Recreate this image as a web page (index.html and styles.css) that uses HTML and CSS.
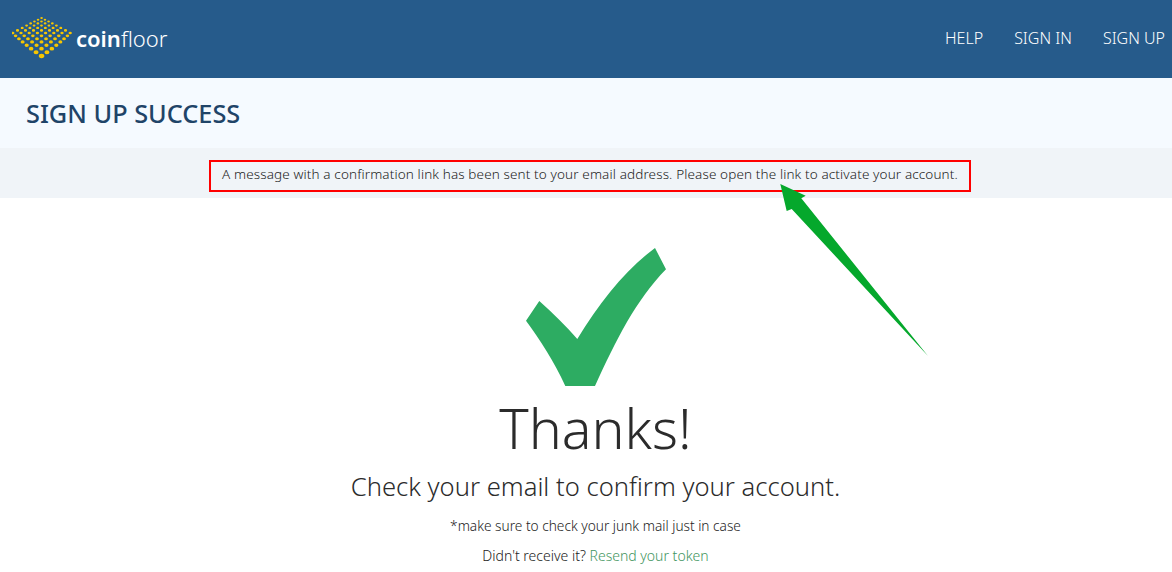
FILE: index.html
```html
<!DOCTYPE html>
<html lang="en">
<head>
<meta charset="utf-8">
<title>Sign up success - Coinfloor</title>
<link rel="stylesheet" href="styles.css">
</head>
<body>
<header class="topbar">
  <a class="brand" href="#">
    <svg class="brand-mark" viewBox="0 0 62 44" width="62" height="44" aria-hidden="true">
      <g transform="translate(-12 -17) scale(1 .8)" fill="none" stroke="#f7c600" stroke-linecap="round">
        <path stroke-width="2.5" d="M41.5 22.5h.1"/>
        <path stroke-width="2.6" stroke-dasharray="0 6.92" d="M38.04 24.6h6.93"/>
        <path stroke-width="2.7" stroke-dasharray="0 7.06" d="M34.44 26.9h14.13"/>
        <path stroke-width="2.8" stroke-dasharray="0 7.24" d="M30.64 29.3h21.73"/>
        <path stroke-width="2.9" stroke-dasharray="0 7.46" d="M26.58 32h29.85"/>
        <path stroke-width="3" stroke-dasharray="0 7.72" d="M22.2 34.9h38.61"/>
        <path stroke-width="3.2" stroke-dasharray="0 8" d="M17.5 38h48.01"/>
        <path stroke-width="3.3" stroke-dasharray="0 8.2" d="M12.8 41.2h57.41"/>
        <path stroke-width="3.6" stroke-dasharray="0 8.64" d="M15.58 44.8h51.85"/>
        <path stroke-width="3.8" stroke-dasharray="0 9.02" d="M18.95 48.4h45.11"/>
        <path stroke-width="4" stroke-dasharray="0 9.44" d="M22.62 52.4h37.77"/>
        <path stroke-width="4.2" stroke-dasharray="0 9.88" d="M26.68 56.5h29.65"/>
        <path stroke-width="4.6" stroke-dasharray="0 10.36" d="M31.14 60.8h20.73"/>
        <path stroke-width="5" stroke-dasharray="0 10.88" d="M36.06 65.3h10.89"/>
        <path stroke-width="5.4" d="M41.5 70h.1"/>
      </g>
    </svg>
    <span class="brand-name"><b>coin</b>floor</span>
  </a>
  <nav class="nav">
    <a href="#">HELP</a>
    <a href="#">SIGN IN</a>
    <a href="#">SIGN UP</a>
  </nav>
</header>
<section class="title-band">
  <h1>SIGN UP SUCCESS</h1>
</section>
<section class="notice-band">
  <p class="notice">A message with a confirmation link has been sent to your email address. Please open the link to activate your account.</p>
</section>
<main class="content">
  <svg class="check" viewBox="526 248 140 138" width="140" height="138" aria-hidden="true">
    <path fill="#2dac62" d="M655 248L666 269.3C636 300 616 340 595 386H565.3C554 361 540 340 526 320.7L539.3 301C553 313 566 326 577.3 339C600 302 625 270 655 248Z"/>
  </svg>
  <h2>Thanks!</h2>
  <h3>Check your email to confirm your account.</h3>
  <p class="junk">*make sure to check your junk mail just in case</p>
  <p class="resend">Didn't receive it? <a href="#">Resend your token</a></p>
</main>
<svg class="arrow" viewBox="0 0 1172 572" width="1172" height="572" aria-hidden="true">
  <path fill="#05a82c" d="M780.3 184L805.7 195.7L801.3 198.3L928 356L791.7 209L786.7 211Z"/>
</svg>
</body>
</html>
```
FILE: styles.css
```css
* { box-sizing: border-box; }
html, body { margin: 0; height: 572px; overflow: hidden; }
body {
  position: relative;
  background: #fff;
  color: #222;
  font-family: "Noto Sans", "Open Sans", sans-serif;
  font-weight: 300;
}
a { text-decoration: none; }
.topbar {
  height: 78px;
  background: #265b8b;
  display: flex;
  align-items: center;
  justify-content: space-between;
  padding: 0 7px 0 12px;
}
.brand { display: flex; align-items: center; color: #fff; gap: 2px; }
.brand-name { font-size: 22px; line-height: 30px; font-weight: 300; padding-bottom: 3px; }
.brand-name b { font-weight: 600; }
.nav { display: flex; gap: 31px; padding-bottom: 3px; }
.nav a { color: #fff; font-size: 16px; font-weight: 300; }
.title-band {
  height: 70px;
  background: #f5faff;
  display: flex;
  align-items: center;
  padding-left: 26px;
}
h1 { margin: 0; font-size: 25.3px; font-weight: 500; color: #1f4468; }
.notice-band {
  height: 50px;
  background: #f0f4f8;
  display: flex;
  justify-content: center;
  align-items: flex-start;
  padding: 12px 0 0 8px;
}
.notice {
  margin: 0;
  width: 762px;
  height: 32px;
  border: 2px solid #f00;
  font-size: 13.5px;
  letter-spacing: .125px;
  line-height: 24px;
  text-align: center;
  white-space: nowrap;
}
.content {
  display: flex;
  flex-direction: column;
  align-items: center;
  padding: 50px 0 0 19px;
}
.check { display: block; }
h2 { margin: 10px 0 0; font-size: 55.5px; line-height: 64px; font-weight: 300; color: #2b2b2b; }
h3 { margin: 11px 0 0; font-size: 25.6px; line-height: 32px; font-weight: 300; color: #2b2b2b; }
.junk { margin: 13px 0 0; font-size: 13.7px; line-height: 20px; }
.resend { margin: 10px 0 0; font-size: 14px; line-height: 20px; }
.resend a { color: #3f9560; }
.arrow { position: absolute; left: 0; top: 0; pointer-events: none; }
```
